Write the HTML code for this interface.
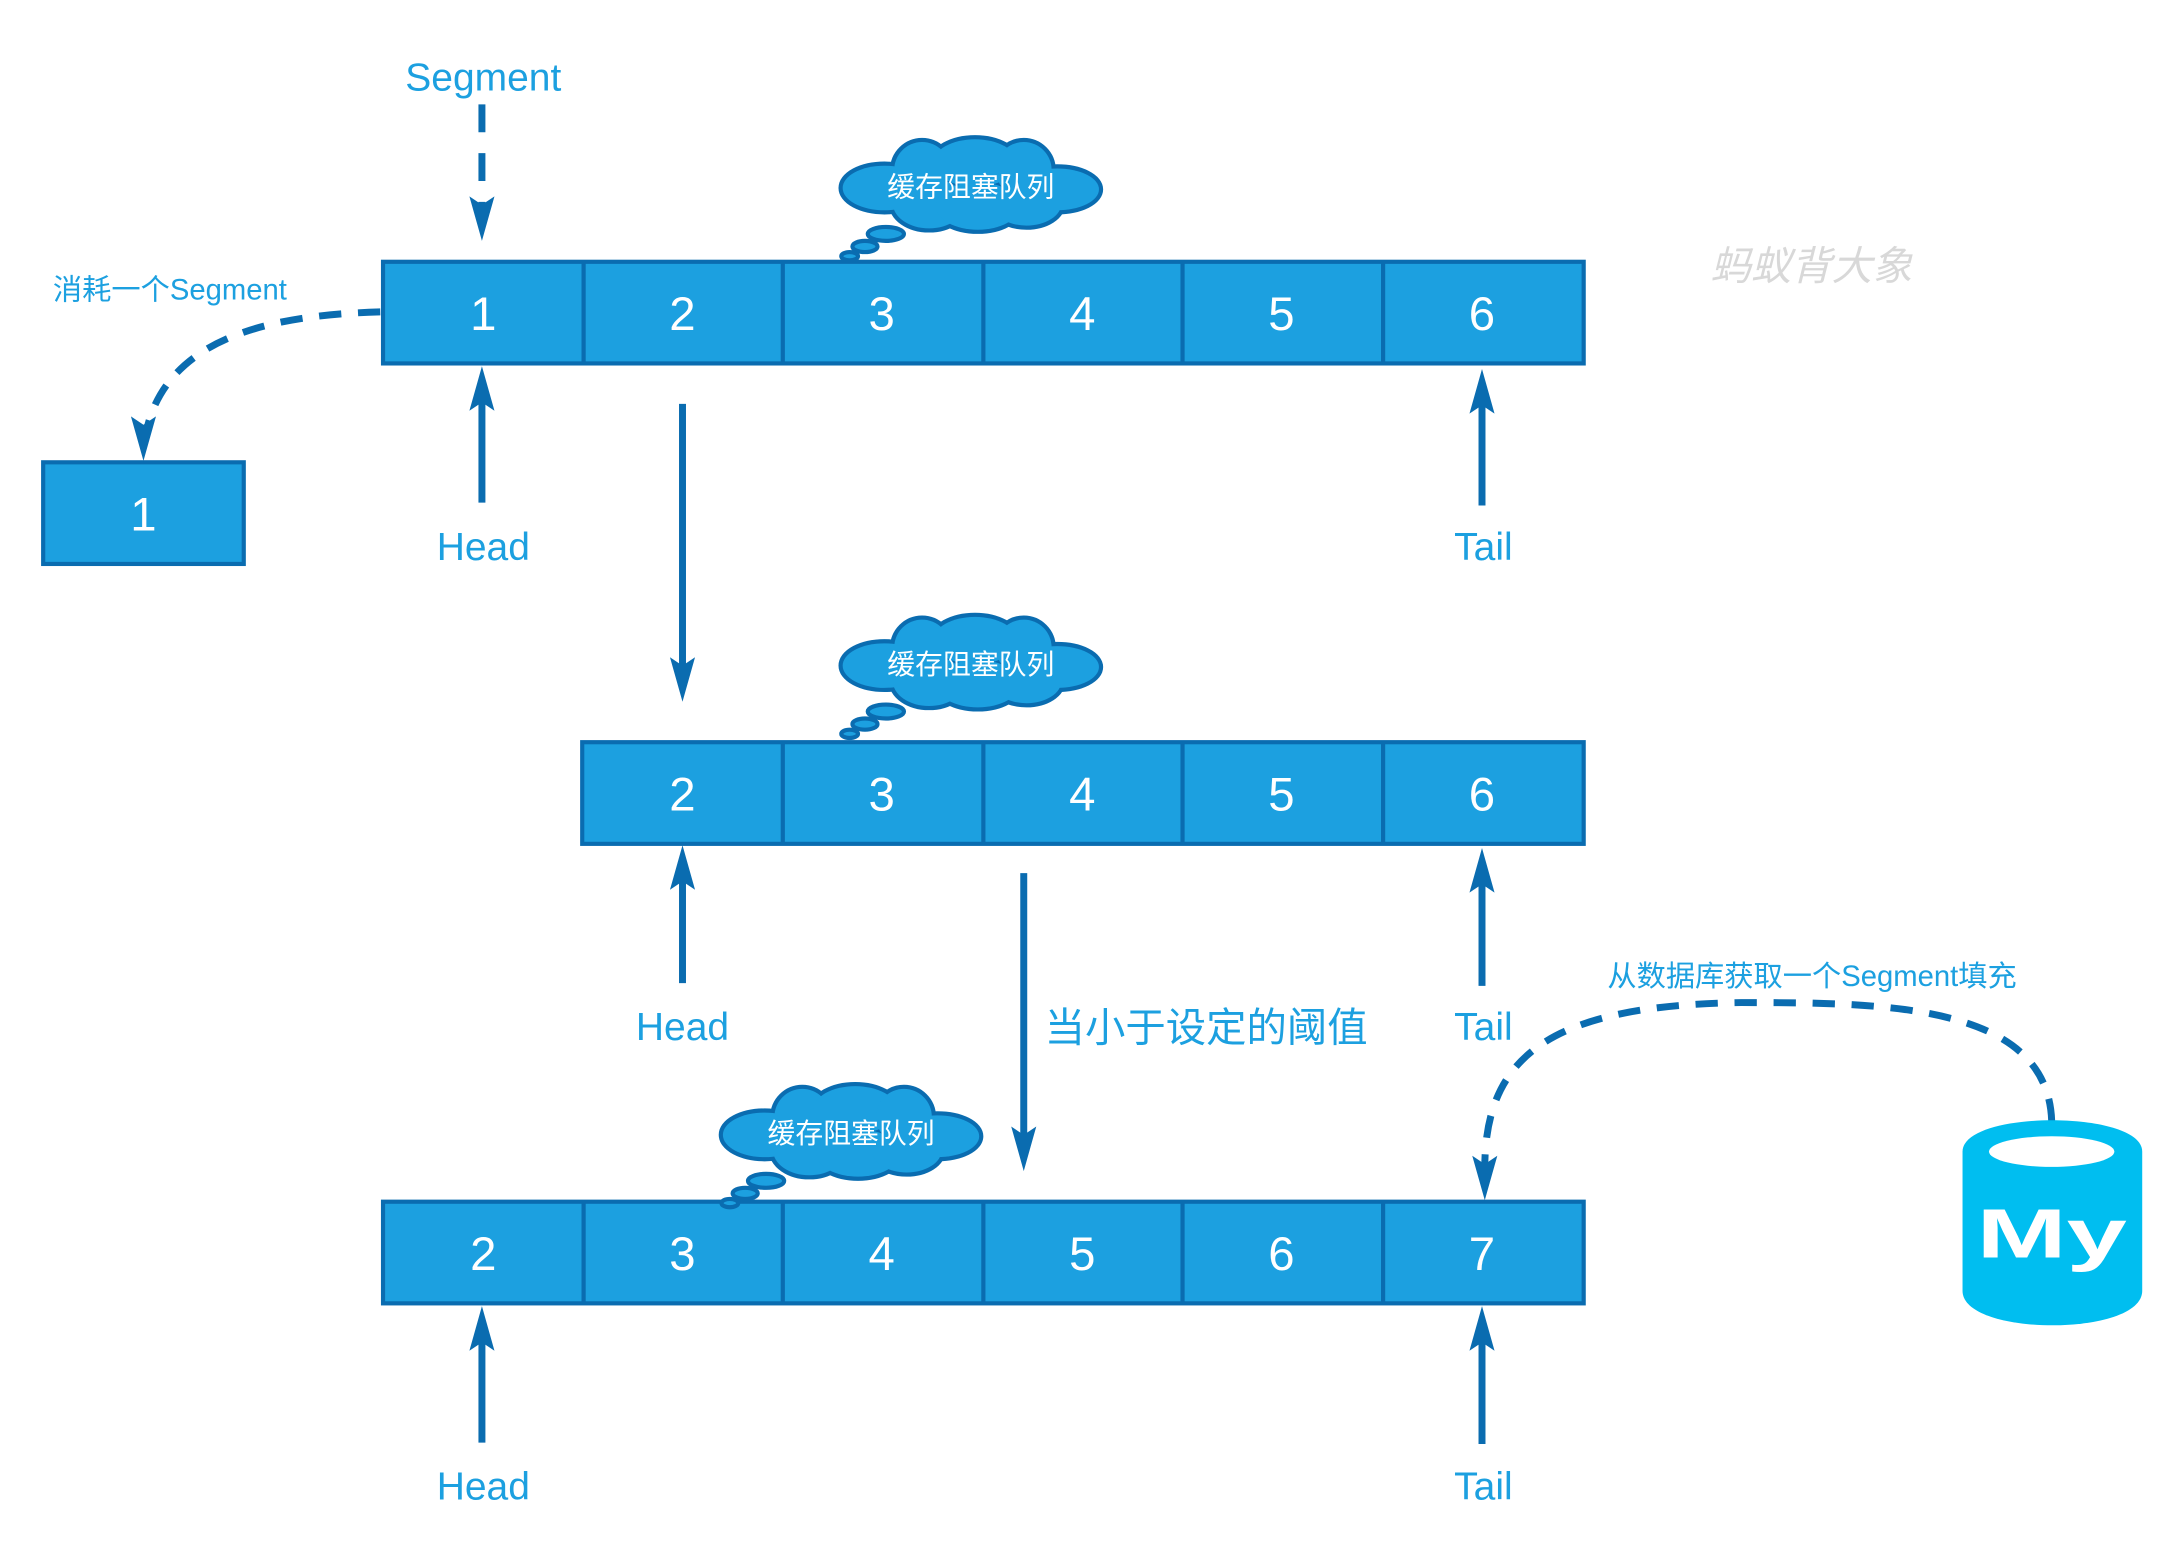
<!DOCTYPE html>
<html><head><meta charset="utf-8"><style>
html,body{margin:0;padding:0;background:#fff;width:2184px;height:1554px;overflow:hidden}
svg{display:block}
text{font-family:"Liberation Sans","Noto Sans CJK SC",sans-serif}
</style></head><body>
<svg width="2184" height="1554" viewBox="0 0 1568 1116" preserveAspectRatio="none" xmlns="http://www.w3.org/2000/svg">
<defs>
<g id="cloud">
 <g fill="#0a6cb0" stroke="#0a6cb0" stroke-width="6">
  <ellipse cx="-62" cy="3" rx="30" ry="16"/><ellipse cx="62" cy="4" rx="30" ry="15"/>
  <circle cx="-35" cy="-10" r="20"/><ellipse cx="3" cy="-15" rx="30" ry="17"/><circle cx="38" cy="-10" r="20"/>
  <ellipse cx="-30" cy="14" rx="26" ry="18"/><ellipse cx="5" cy="16" rx="30" ry="17"/><ellipse cx="40" cy="14" rx="25" ry="16"/>
 </g>
 <g fill="#1ca0e0">
  <ellipse cx="-62" cy="3" rx="30" ry="16"/><ellipse cx="62" cy="4" rx="30" ry="15"/>
  <circle cx="-35" cy="-10" r="20"/><ellipse cx="3" cy="-15" rx="30" ry="17"/><circle cx="38" cy="-10" r="20"/>
  <ellipse cx="-30" cy="14" rx="26" ry="18"/><ellipse cx="5" cy="16" rx="30" ry="17"/><ellipse cx="40" cy="14" rx="25" ry="16"/>
 </g>
 <g fill="#1ca0e0" stroke="#0a6cb0" stroke-width="3">
  <ellipse cx="-61" cy="36" rx="13" ry="5"/><ellipse cx="-76" cy="45" rx="9" ry="4"/><ellipse cx="-87" cy="52" rx="6" ry="3"/>
 </g>
 <text x="0" y="9" font-size="20" fill="#fff" text-anchor="middle">缓存阻塞队列</text>
</g>
</defs>

<g stroke="#0a6cb0" stroke-width="3" fill="#1ca0e0">
 <rect x="275" y="188" width="862" height="73"/>
 <rect x="418" y="533" width="719" height="73"/>
 <rect x="275" y="863" width="862" height="73"/>
 <rect x="31" y="332" width="144" height="73"/>
</g>
<g stroke="#0a6cb0" stroke-width="3">
 <path d="M419 188V261M562 188V261M706 188V261M849 188V261M993 188V261"/>
 <path d="M562 533V606M706 533V606M849 533V606M993 533V606"/>
 <path d="M419 863V936M562 863V936M706 863V936M849 863V936M993 863V936"/>
</g>
<g fill="#fff" font-size="34" text-anchor="middle">
 <text x="347" y="237">1</text><text x="490" y="237">2</text><text x="633" y="237">3</text><text x="777" y="237">4</text><text x="920" y="237">5</text><text x="1064" y="237">6</text>
 <text x="490" y="582">2</text><text x="633" y="582">3</text><text x="777" y="582">4</text><text x="920" y="582">5</text><text x="1064" y="582">6</text>
 <text x="347" y="912">2</text><text x="490" y="912">3</text><text x="633" y="912">4</text><text x="777" y="912">5</text><text x="920" y="912">6</text><text x="1064" y="912">7</text>
 <text x="103" y="381">1</text>
</g>

<use href="#cloud" x="697" y="132"/>
<use href="#cloud" x="697" y="475"/>
<use href="#cloud" x="611" y="812"/>

<g stroke="#0a6cb0" stroke-width="5" fill="none">
 <path d="M346 361V285M1064 363V287M490 290V485M490 706V630M1064 708V632M735 627V820M346 1036V960M1064 1037V961"/>
 <path d="M346 75V158" stroke-dasharray="20 15"/>
 <path d="M273 224C200 226 120 240 105 310" stroke-dasharray="16 12"/>
 <path d="M1473 805C1470 720 1350 720 1250 720C1110 722 1065 760 1066 842" stroke-dasharray="16 12"/>
</g>
<g fill="#0a6cb0">
 <path d="M346 263l-9 32l9-6l9 6z"/><path d="M1064 265l-9 32l9-6l9 6z"/>
 <path d="M490 607l-9 32l9-6l9 6z"/><path d="M1064 609l-9 32l9-6l9 6z"/>
 <path d="M346 938l-9 32l9-6l9 6z"/><path d="M1064 938l-9 32l9-6l9 6z"/>
 <path d="M490 504l-9-32l9 6l9-6z"/><path d="M735 841l-9-32l9 6l9-6z"/>
 <path d="M346 173l-9-32l9 6l9-6z"/><path d="M103 331l-9-32l9 6l9-6z"/><path d="M1066 862l-9-32l9 6l9-6z"/>
</g>

<g fill="#1ca0e0" text-anchor="middle" font-size="28">
 <text x="347" y="65">Segment</text>
 <text x="347" y="402">Head</text><text x="1065" y="402">Tail</text>
 <text x="490" y="747">Head</text><text x="1065" y="747">Tail</text>
 <text x="347" y="1077">Head</text><text x="1065" y="1077">Tail</text>
</g>
<text x="38" y="215" font-size="21" fill="#1ca0e0">消耗一个Segment</text>
<text x="750" y="748" font-size="29" fill="#1ca0e0">当小于设定的阈值</text>
<text x="1154" y="708" font-size="21" fill="#1ca0e0">从数据库获取一个Segment填充</text>
<text x="1228" y="201" font-size="29" fill="#d8d8d8" font-style="italic">蚂蚁背大象</text>

<g>
 <path d="M1409 827C1409 797 1538 797 1538 827V927C1538 960 1409 960 1409 927Z" fill="#00bef0"/>
 <ellipse cx="1473" cy="827" rx="45" ry="11" fill="#fff"/>
 <text x="1473" y="903" font-size="50" font-weight="bold" fill="#fff" text-anchor="middle" textLength="108" lengthAdjust="spacingAndGlyphs">My</text>
</g>
</svg>
</body></html>
